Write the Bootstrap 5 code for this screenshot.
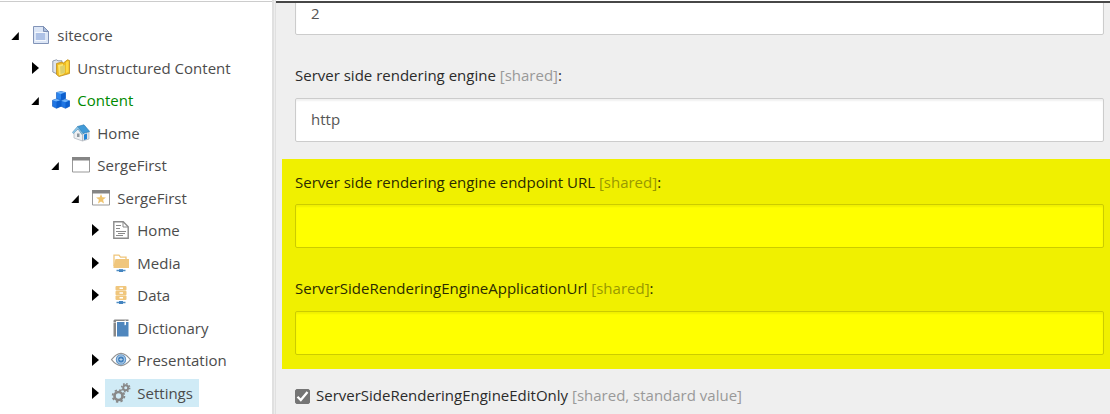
<!DOCTYPE html>
<html lang="en">
<head>
<meta charset="utf-8">
<meta name="viewport" content="width=device-width, initial-scale=1">
<title>Content Editor</title>
<link href="https://cdn.jsdelivr.net/npm/bootstrap@5.3.0/dist/css/bootstrap.min.css" rel="stylesheet">
<style>
body{font:15px/20px "Open Sans",sans-serif;color:#2b2b2b;height:414px;overflow:hidden;background:#fff}
.tree-pane{width:272px;padding-top:17.2px;border-top:1px solid #ccc;margin-top:1px;color:#4c4c4c}
.tree-row{height:32.5px;padding-left:calc(11px + var(--lv)*20px)}
.lv0{--lv:0}.lv1{--lv:1}.lv2{--lv:2}.lv3{--lv:3}.lv4{--lv:4}
.twisty{width:9px;height:12px;margin-right:5px;flex:none}
.node{height:28px;padding:0 5.700px 0 7px}
.node svg{width:18px;height:18px;margin-right:7.300px;flex:none}
.node.selected{background:#d0ebf6}
.node.current{color:#008a00}
.splitter{width:4px;background:linear-gradient(90deg,#e0e0e0 0 2px,#ededed 2px 3px,#e0e0e0 3px)}
.editor{background:#efefef;border-top:2px solid #474747;margin-top:1px;min-width:0}
.fields{padding-left:6px}
.field{padding:29.5px 6px 0 13px}
.field label{display:block;height:20px;margin-bottom:13px}
.field.clipped{padding-top:0;margin-top:-12px;margin-bottom:.5px}
.scope{color:#999}
.form-control,.form-control:focus{height:44px;font-size:15px;border:1px solid #ccc;border-radius:2px;color:#555;padding:0 15px 2px;box-shadow:inset 0 2px 2px rgba(0,0,0,.06);background:#fff}
.field.clipped .form-control{padding-bottom:0}
.marked{margin-top:17px;padding-bottom:14px;background:#f0f000}
.marked .field:first-child{padding-top:13px}
.marked .field:first-child label{margin-bottom:12px}
.marked .field:last-child{padding-top:30px}
.marked .form-control{background:#ff0;border-color:#cc0}
.marked{color:#2b2b00}
.marked .scope{color:#999900}
.check-row{padding:16px 0 0 13px}
.form-check-input{width:15px;height:15px;margin:4px 6px 0 0;border-radius:2px!important}
.form-check-input:checked{background-color:#757575;border-color:#757575;background-size:15px;background-image:url("data:image/svg+xml,%3Csvg xmlns='http://www.w3.org/2000/svg' viewBox='0 0 15 15'%3E%3Cpath d='m2.500 7.800 3.300 3.300 6.700-8' fill='none' stroke='white' stroke-width='2.300'/%3E%3C/svg%3E")}
</style>
</head>
<body>
<svg class="d-none">
  <symbol id="open" viewBox="0 0 9 12"><path d="M7.800 3v8H.3z" fill="#000"/></symbol>
  <symbol id="closed" viewBox="0 0 9 12"><path d="M1 0v12l7-6z" fill="#000"/></symbol>
</svg>
<div class="d-flex vh-100">
  <nav class="tree-pane flex-shrink-0 text-nowrap">
    <div class="tree-row lv0 d-flex align-items-center"><svg class="twisty"><use href="#open"/></svg>
      <div class="node d-flex align-items-center"><svg viewBox="0 0 18 18"><path d="M1.500.5h10l5 5v12h-15z" fill="#dce6f6" stroke="#8294b8"/><path d="M11.500.5v5h5z" fill="#aebfdd" stroke="#7d90b5"/><path d="M4 7h9v7H4z" fill="#aec2e6"/><path d="M3 6.500h11M3 14.500h11" stroke="#f5f8fd"/></svg>sitecore</div></div>
    <div class="tree-row lv1 d-flex align-items-center"><svg class="twisty"><use href="#closed"/></svg>
      <div class="node d-flex align-items-center"><svg viewBox="0 0 18 18"><path d="M.8 2 4.500.8l1.500 1h4v12l-4 1.500L.8 13z" fill="#dfe4ec" stroke="#929caf"/><path d="M4.500 4.500 10 3l1 1.300L15.500.8l2 .7v13L7 17.500l-2.500-2z" fill="#eebc23" stroke="#c08d1a" stroke-width=".8"/><path d="m6 6 5-1 .8 10L7 16.500z" fill="#ffe66e"/><path d="m8 7.500 5-1.500v8l-4.500 1z" fill="#ddd06d"/><path d="m14 3 2.500-1v11L14 14z" fill="#ffd944"/></svg>Unstructured Content</div></div>
    <div class="tree-row lv1 d-flex align-items-center"><svg class="twisty"><use href="#open"/></svg>
      <div class="node current d-flex align-items-center"><svg viewBox="0 0 18 18"><g stroke="#0752b8" stroke-width=".6"><path d="m4.500 1.500 4.500-1 4.500 1v6L9 9.500l-4.500-2z" fill="#2b84ee"/><path d="m.5 9.300 4-1.300L9 9.300v6l-4.500 2-4-2z" fill="#1f75e3"/><path d="m9 9.800 4.500-1.300 4 1.300v5.500l-4 2L9 15.300z" fill="#1f75e3"/></g><path d="m4.500 1.500 4.500-1 4.500 1L9 2.900zM.5 9.300l4-1.300L9 9.300l-4.500 1.300zM9 9.800l4.500-1.300 4 1.300-4 1.400z" fill="#72b5fb"/><path d="m9 2.900 4.500-1.400v6L9 9.500zM4.500 10.600 9 9.300v6l-4.500 2zM13.500 11.200l4-1.400v5.500l-4 2z" fill="#0c5fce"/></svg>Content</div></div>
    <div class="tree-row lv2 d-flex align-items-center"><span class="twisty"></span>
      <div class="node d-flex align-items-center"><svg viewBox="0 0 18 18"><path d="M2 8 6 4.500l4.500 6v6.500L2 14z" fill="#eef0f2" stroke="#a9afb7" stroke-width=".7"/><path d="M10.500 9.500 14.500 6 17 8v7l-6.500 2z" fill="#dfe3e8" stroke="#aab1ba" stroke-width=".7"/><path d="M5.500 2.500 12 .8l5.700 6.700-6.700 2z" fill="#429bd8" stroke="#2877ae" stroke-width=".6"/><path d="m5.500 2.500-5.200 6 1 1L6 5l4 5.500L11 9.500z" fill="#8dc9ed" stroke="#4585ac" stroke-width=".5"/><path d="m12 10.500 3-1v5.500l-3 1z" fill="#2384d4"/><path d="M5 9.500h2.500v3.500H5z" fill="#8d969e"/></svg>Home</div></div>
    <div class="tree-row lv2 d-flex align-items-center"><svg class="twisty"><use href="#open"/></svg>
      <div class="node d-flex align-items-center"><svg viewBox="0 0 18 18"><path d="M.5 2.500h17v13.500H.5z" fill="#fff" stroke="#999"/><path d="M0 1h18v3.500H0z" fill="#858585"/></svg>SergeFirst</div></div>
    <div class="tree-row lv3 d-flex align-items-center"><svg class="twisty"><use href="#open"/></svg>
      <div class="node d-flex align-items-center"><svg viewBox="0 0 18 18"><path d="M.5 2.500h17v13.500H.5z" fill="#fff" stroke="#999"/><path d="M0 1h18v3.500H0z" fill="#858585"/><path d="m9 5 1.300 3.200 3.600.2-2.800 2.300.9 3.700-3-2-3 2 .9-3.700-2.800-2.300 3.600-.2z" fill="#efc46e"/></svg>SergeFirst</div></div>
    <div class="tree-row lv4 d-flex align-items-center"><svg class="twisty"><use href="#closed"/></svg>
      <div class="node d-flex align-items-center"><svg viewBox="0 0 18 18" fill="none" stroke="#8a8a8a"><path d="M1.800.8h9.400l5 5v11.400H1.800z" stroke-width="1.400"/><path d="M11 1v5h5M4 4.500h5M4 7.500h4M4 10.500h10M6 12.500h7M4 14.500h7"/></svg>Home</div></div>
    <div class="tree-row lv4 d-flex align-items-center"><svg class="twisty"><use href="#closed"/></svg>
      <div class="node d-flex align-items-center"><svg viewBox="0 0 18 18"><path d="M2 12V1.200h5l1.500 2H14V5" fill="#fff" stroke="#efc57a" stroke-width="1.300"/><path d="M3.500 5H17v9H1.500v-2z" fill="#f0c67c"/><path d="M4.500 16.500h9" stroke="#4f8ec5" stroke-width="1.500"/><path d="M7 15.200h4V18H7z" fill="#4484c0"/></svg>Media</div></div>
    <div class="tree-row lv4 d-flex align-items-center"><svg class="twisty"><use href="#closed"/></svg>
      <div class="node d-flex align-items-center"><svg viewBox="0 0 18 18"><rect x="3.500" y="0" width="11" height="4.600" rx="1" fill="#f0c67c"/><rect x="3.500" y="4.800" width="11" height="4.500" rx="1" fill="#f0c67c"/><rect x="3.500" y="9.500" width="11" height="4.500" rx="1" fill="#f0c67c"/><path d="M7.500 2.300H11M7.500 7H11M7.500 11.700H11" stroke="#fff" stroke-width="1.400"/><path d="M4.500 16.500h9" stroke="#4f8ec5" stroke-width="1.500"/><path d="M7 15h4v3H7z" fill="#4484c0"/></svg>Data</div></div>
    <div class="tree-row lv4 d-flex align-items-center"><span class="twisty"></span>
      <div class="node d-flex align-items-center"><svg viewBox="0 0 18 18"><path d="M2.500.5h14V2H4v1H1.500V1.500zM1.500 3.500H4v14H1.500z" fill="#888"/><path d="M5 3h11.500v14.500H5z" fill="#4f86bd"/><path d="M12.500 1.500H14v5l-.8-.7-.7.700z" fill="#fff"/></svg>Dictionary</div></div>
    <div class="tree-row lv4 d-flex align-items-center"><svg class="twisty"><use href="#closed"/></svg>
      <div class="node d-flex align-items-center"><svg viewBox="0 0 18 18" overflow="visible"><path d="M-.5 8.700Q9-4 18.500 8.700 9 20.500-.5 8.700z" fill="#fff" stroke="#949494" stroke-width="1.100"/><circle cx="9" cy="8.500" r="4.700" fill="#a9c8e6" stroke="#6095c7" stroke-width="1.100"/><circle cx="9" cy="8.500" r="2.900" fill="#3f7fbd"/><path d="M9 6.900v3.200M7.400 8.500h3.200" stroke="#b9d3ea"/></svg>Presentation</div></div>
    <div class="tree-row lv4 d-flex align-items-center"><svg class="twisty"><use href="#closed"/></svg>
      <div class="node selected d-flex align-items-center"><svg viewBox="0 0 18 18" overflow="visible" fill="none" stroke="#888"><circle cx="6.500" cy="12" r="4" stroke-width="2.700"/><circle cx="6.500" cy="12" r="5.900" stroke-width="1.800" stroke-dasharray="2.320 2.320"/><circle cx="13.700" cy="3.700" r="2.500" stroke-width="2"/><circle cx="13.700" cy="3.700" r="4" stroke-width="1.500" stroke-dasharray="1.570 1.570"/></svg>Settings</div></div>
  </nav>
  <div class="splitter flex-shrink-0"></div>
  <main class="editor flex-grow-1 overflow-hidden">
    <div class="fields">
      <div class="field clipped"><input class="form-control" type="text" value="2" aria-label="Port"></div>
      <div class="field"><label for="engine">Server side rendering engine <span class="scope">[shared]</span>:</label><input id="engine" class="form-control" type="text" value="http"></div>
      <section class="marked">
        <div class="field"><label for="endpoint">Server side rendering engine endpoint URL <span class="scope">[shared]</span>:</label><input id="endpoint" class="form-control" type="text"></div>
        <div class="field"><label for="appurl">ServerSideRenderingEngineApplicationUrl <span class="scope">[shared]</span>:</label><input id="appurl" class="form-control" type="text"></div>
      </section>
      <div class="check-row d-flex"><input id="editonly" class="form-check-input flex-shrink-0" type="checkbox" checked><label for="editonly">ServerSideRenderingEngineEditOnly <span class="scope">[shared, standard value]</span></label></div>
    </div>
  </main>
</div>
<script src="https://cdn.jsdelivr.net/npm/bootstrap@5.3.0/dist/js/bootstrap.bundle.min.js"></script>
</body>
</html>
